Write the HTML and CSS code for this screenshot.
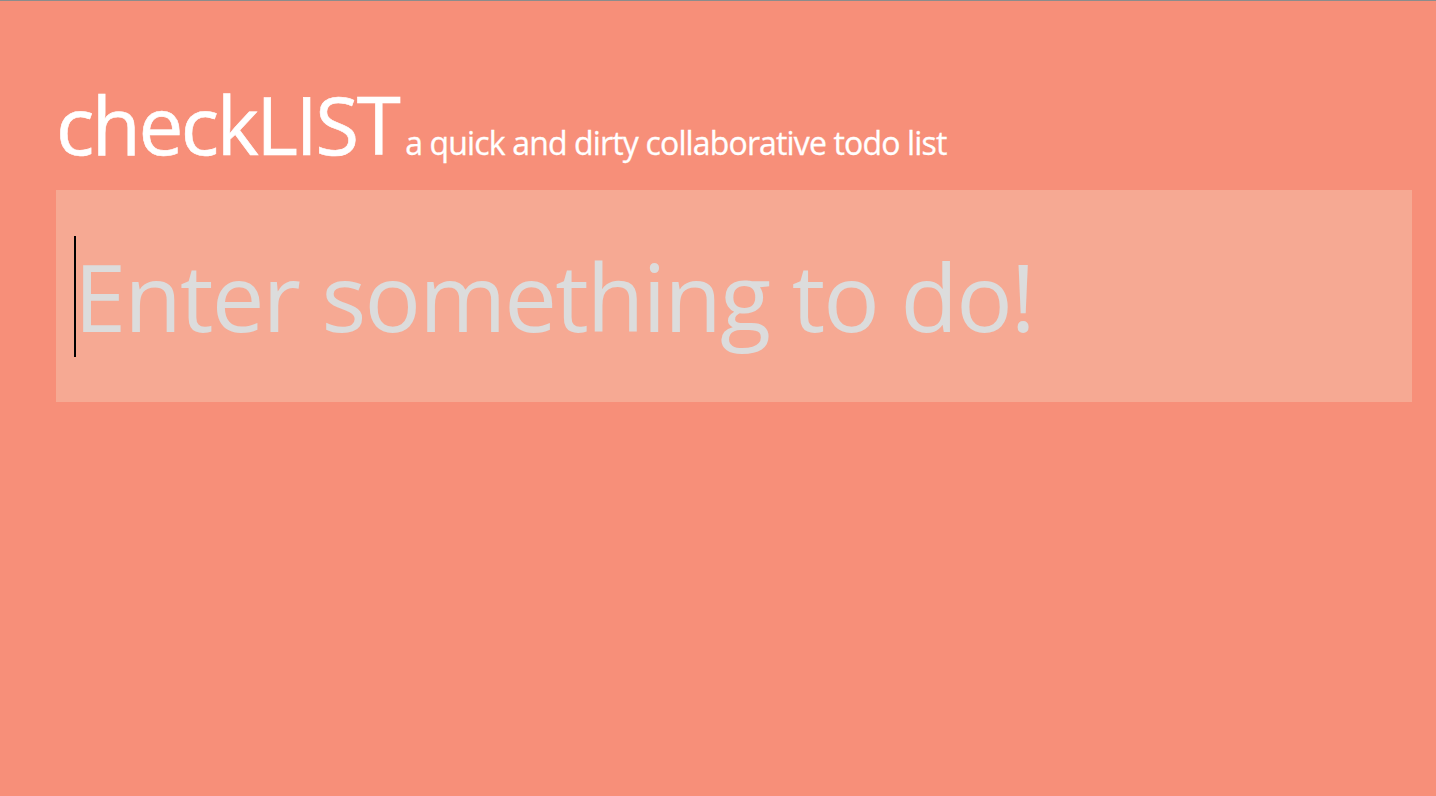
FILE: index.html
```html
<!DOCTYPE html>
<html lang="en">
<head>
<meta charset="utf-8">
<title>checkLIST</title>
<link rel="stylesheet" href="styles.css">
</head>
<body>
<div class="topline"></div>
<main class="page">
  <header class="header">
    <h1 class="title">checkLIST</h1>
    <span class="subtitle">a quick and dirty collaborative todo list</span>
  </header>
  <div class="entry">
    <span class="caret"></span>
    <input class="entry-input" type="text" placeholder="Enter something to do!">
  </div>
</main>
</body>
</html>
```
FILE: styles.css
```css
html, body {
  margin: 0;
  padding: 0;
}
body {
  background: #f78f79;
  min-height: 100vh;
  font-family: "Open Sans", "Noto Sans", sans-serif;
  color: #fff;
}
.topline {
  height: 1px;
  background: #8c8c8c;
}
.page {
  padding: 83px 24px 0 56px;
}
.header {
  display: flex;
  align-items: baseline;
  gap: 7px;
  height: 80px;
}
.title {
  margin: 0;
  font-size: 80px;
  line-height: 80px;
  font-weight: 400;
  letter-spacing: -2.5px;
  -webkit-text-stroke: 0.6px #fff;
}
.subtitle {
  font-size: 32px;
  font-weight: 400;
  letter-spacing: -0.85px;
  -webkit-text-stroke: 0.3px #fff;
}
.entry {
  position: relative;
  margin-top: 26px;
  height: 212px;
  background: #f6a993;
  display: flex;
  align-items: center;
}
.caret {
  position: absolute;
  left: 18px;
  top: 46px;
  width: 2px;
  height: 121px;
  background: #000;
}
.entry-input {
  flex: 1;
  height: 100%;
  border: 0;
  outline: 0;
  background: transparent;
  padding: 0 18px;
  font-family: "Open Sans", "Noto Sans", sans-serif;
  font-size: 94px;
  letter-spacing: -1.9px;
  color: #555;
  caret-color: transparent;
}
.entry-input::placeholder {
  color: #dcdcdc;
  opacity: 1;
}
```
